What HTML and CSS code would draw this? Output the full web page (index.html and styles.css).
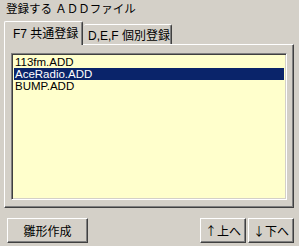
FILE: index.html
```html
<!DOCTYPE html>
<html lang="ja">
<head>
    <meta charset="UTF-8">
    <title>登録する ＡＤＤファイル</title>
    <link rel="stylesheet" href="styles.css">
</head>
<body>
    <div class="dialog">
        <div class="title">登録する ＡＤＤファイル</div>
        <div class="tabs">
            <div class="tab active">F7 共通登録</div>
            <div class="tab">D,E,F 個別登録</div>
        </div>
        <div class="panel">
            <div class="listbox">
                <div class="item">113fm.ADD</div>
                <div class="item selected">AceRadio.ADD</div>
                <div class="item">BUMP.ADD</div>
            </div>
        </div>
        <div class="footer">
            <button class="button wide">雛形作成</button>
            <div class="spacer"></div>
            <button class="button small">↑上へ</button>
            <button class="button small">↓下へ</button>
        </div>
    </div>
</body>
</html>
```

FILE: styles.css
```css
/* 登録ダイアログ */
body {
    margin: 0;
    width: 299px;
    height: 246px;
    background-color: #d4d0c8;
    font-family: "Liberation Sans", "Noto Sans CJK JP", sans-serif;
    font-size: 12px;
    color: #000;
    overflow: hidden;
}

.dialog {
    display: flex;
    flex-direction: column;
}

.title {
    height: 21px;
    line-height: 14px;
    font-size: 11.5px;
    padding: 2px 0 0 6px;
    box-sizing: border-box;
}

.tabs {
    display: flex;
    align-items: flex-end;
    padding-left: 4px;
    height: 23px;
    position: relative;
    z-index: 1;
}

.tab {
    height: 20px;
    line-height: 18px;
    padding: 0 4px 0 4px;
    box-sizing: border-box;
    border-top: 1px solid #fff;
    border-right: 1px solid #404040;
    box-shadow: inset -1px 0 0 #808080;
    border-radius: 2px 2px 0 0;
    background-color: #d4d0c8;
    white-space: nowrap;
}

.tab.active {
    width: 79px;
    height: 24px;
    margin-bottom: -1px;
    padding: 3px 0 0 8px;
    border-left: 1px solid #fff;
}

.tab:not(.active) {
    width: 88px;
    margin-left: 1px;
    padding-top: 2px;
}

.panel {
    margin: 0 5px 0 4px;
    height: 164px;
    box-sizing: border-box;
    border-top: 1px solid #fff;
    border-left: 1px solid #fff;
    border-right: 1px solid #404040;
    border-bottom: 1px solid #404040;
    box-shadow: inset -1px -1px 0 #808080;
    padding: 8px 0 0 6px;
}

.listbox {
    width: 276px;
    height: 147px;
    box-sizing: border-box;
    border-top: 1px solid #808080;
    border-left: 1px solid #808080;
    border-right: 1px solid #fff;
    border-bottom: 1px solid #fff;
    box-shadow: inset 1px 1px 0 #404040, inset -1px -1px 0 #d4d0c8;
    background-color: #ffffcc;
    padding: 2px 2px 0 2px;
}

.item {
    height: 12px;
    line-height: 12px;
    padding-left: 1px;
    font-size: 11.5px;
    white-space: nowrap;
}

.item.selected {
    background-color: #0a246a;
    color: #fff;
}

.footer {
    display: flex;
    padding: 10px 5px 0 7px;
}

.spacer {
    flex: 1;
}

.button {
    height: 25px;
    font-family: "Noto Sans CJK JP", "Liberation Sans", sans-serif;
    font-size: 12px;
    background-color: #d4d0c8;
    border-top: 1px solid #fff;
    border-left: 1px solid #fff;
    border-right: 1px solid #404040;
    border-bottom: 1px solid #404040;
    box-shadow: inset -1px -1px 0 #808080;
    border-radius: 0;
    padding: 0;
    color: #000;
}

.wide {
    width: 81px;
}

.small {
    width: 46px;
    margin-left: 2px;
}
```
